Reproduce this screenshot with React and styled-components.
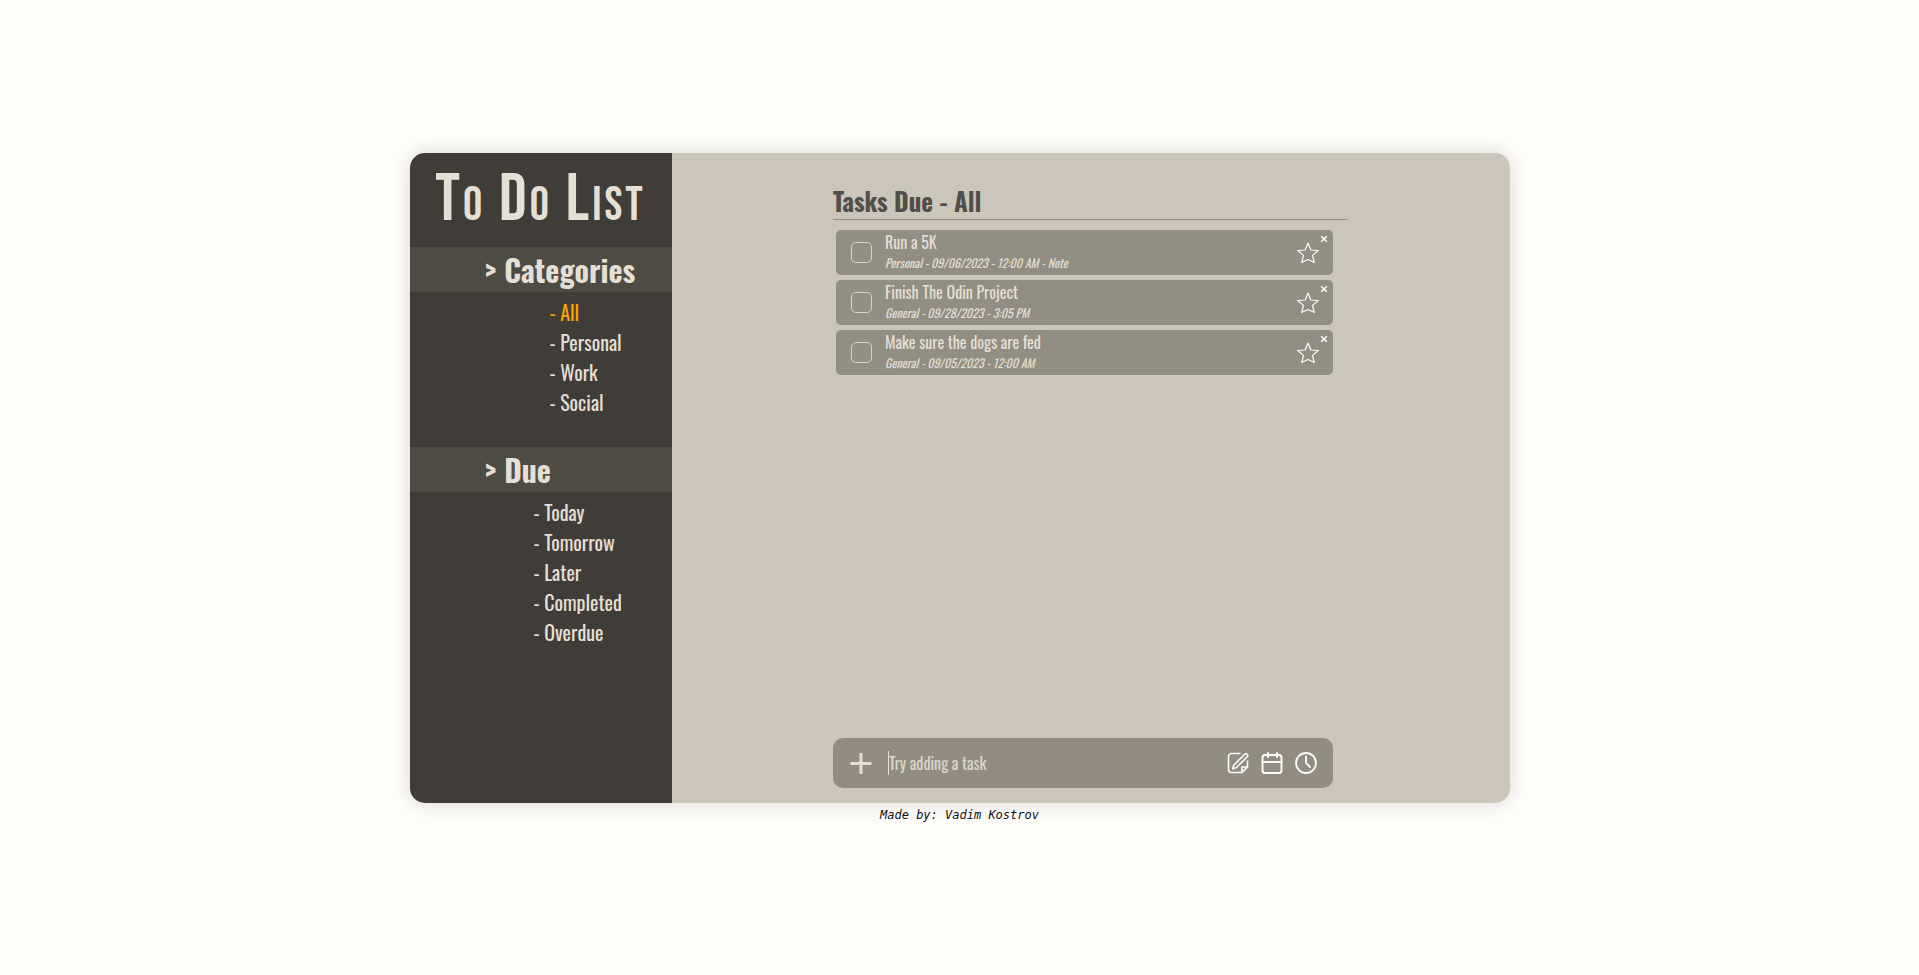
import React, { useState } from "react";
import styled, { createGlobalStyle } from "styled-components";

const Global = createGlobalStyle`
  *, *::before, *::after { box-sizing: border-box; }
  body {
    margin: 0;
    background: #fffdfa;
    color: #e6dfd4;
    font-family: "Oswald", "Liberation Sans Narrow", "Liberation Sans", sans-serif;
  }
  button, input { font: inherit; color: inherit; }
`;

const Page = styled.div`
  min-height: 100vh;
  display: flex;
  flex-direction: column;
  align-items: center;
  justify-content: center;
`;

const Card = styled.div`
  display: flex;
  width: 100%;
  max-width: 1100px;
  min-height: 650px;
  border-radius: 15px;
  overflow: hidden;
  box-shadow: 0 0 20px rgba(0, 0, 0, 0.15);
`;

const Sidebar = styled.aside`
  flex: 0 0 262px;
  background: #403d38;
`;

const Logo = styled.h1`
  margin: 0;
  height: 94px;
  padding-top: 15px;
  text-align: center;
  font-family: "Bebas Neue", "Oswald", "Liberation Sans Narrow", sans-serif;
  font-size: 68px;
  line-height: 64px;
  font-weight: 400;
  font-variant: small-caps;
  letter-spacing: 3px;
  white-space: nowrap;
`;

const Band = styled.h2`
  margin: 0;
  padding-left: 75px;
  background: #4e4b43;
  font-size: 30px;
  line-height: 45px;
  font-weight: 700;
`;

const Links = styled.ul`
  list-style: none;
  margin: 0;
  padding: 5px 0 30px ${(p) => p.$indent}px;
`;

const NavLink = styled.a`
  display: block;
  font-size: 20px;
  line-height: 30px;
  color: ${(p) => (p.$active ? "orange" : "inherit")};
  text-decoration: none;
`;

const Main = styled.main`
  flex: 1;
  display: flex;
  justify-content: center;
  background: #ccc5b9;
  padding: 30px 20px 15px;
`;

const Column = styled.div`
  width: 515px;
  display: flex;
  flex-direction: column;
`;

const Title = styled.h2`
  margin: 0;
  border-bottom: 1px solid #8f8b7d;
  color: #524f48;
  font-size: 25px;
  line-height: 36px;
  font-weight: 700;
`;

const Tasks = styled.ul`
  list-style: none;
  flex: 1;
  display: flex;
  flex-direction: column;
  gap: 5px;
  margin: 0;
  padding: 10px 15px 0 3px;
`;

const Task = styled.li`
  display: flex;
  height: 45px;
  padding: 0 5px 0 15px;
  border-radius: 5px;
  background: #928e82;
`;

const TaskLabel = styled.label`
  flex: 1;
  display: flex;
  align-items: center;
  gap: 13px;
`;

const Check = styled.input`
  appearance: none;
  width: 21px;
  height: 21px;
  margin: 0;
  border: 1px solid #d9d6bf;
  border-radius: 5px;
  &:checked { background: #e6dfd4; }
`;

const TaskText = styled.span`
  display: flex;
  flex-direction: column;
  padding-bottom: 1px;
`;

const Name = styled.span`
  font-size: 16px;
  line-height: 22px;
`;

const Meta = styled.em`
  font-size: 12px;
  line-height: 20px;
`;

const IconButton = styled.button`
  display: flex;
  align-items: center;
  justify-content: center;
  padding: 0;
  border: 0;
  background: none;
  color: #fbfaf6;
  cursor: pointer;
`;

const CloseButton = styled(IconButton)`
  align-self: flex-start;
  width: 8px;
  height: 18px;
`;

const AddBar = styled.form`
  display: flex;
  align-items: center;
  height: 50px;
  margin-right: 15px;
  padding: 0 15px;
  gap: 10px;
  border-radius: 10px;
  background: #938c81;
`;

const TaskInput = styled.input`
  flex: 1;
  min-width: 0;
  height: 24px;
  margin-left: 4px;
  padding: 0;
  border: 0;
  border-left: 1px solid #e6dfd4;
  outline: 0;
  background: none;
  font-size: 16px;
  &::placeholder { color: #dcd5ca; opacity: 1; }
`;

const Footer = styled.footer`
  height: 19px;
  color: #111;
  font: italic 12px/24px "DejaVu Sans Mono", monospace;
`;

const StarIcon = () => (
  <svg width="24" height="24" viewBox="0 0 24 24" fill="none" stroke="currentColor" strokeWidth="1.2" strokeLinejoin="round">
    <path d="M12 2l2.800 7 7.500.500-5.800 4.900 1.800 7.100L12 18.500l-6.300 3 1.800-7.100L1.700 9.500l7.500-.500z" />
  </svg>
);

const CloseIcon = () => (
  <svg width="8" height="8" viewBox="0 0 8 8" stroke="currentColor" strokeWidth="1.6">
    <path d="M1.200 1.200l5.600 5.600M6.800 1.200l-5.600 5.600" />
  </svg>
);

const PlusIcon = () => (
  <svg width="26" height="26" viewBox="0 0 26 26" stroke="#e6dfd4" strokeWidth="3">
    <path d="M2.500 13.500h21M13 3v21" />
  </svg>
);

const NoteIcon = () => (
  <svg width="24" height="24" viewBox="0 0 24 24" fill="none" stroke="currentColor" strokeWidth="1.6" strokeLinecap="round" strokeLinejoin="round">
    <path d="M14 2.500H5.500a3 3 0 0 0-3 3v13a3 3 0 0 0 3 3H16l5.500-5.500V10" />
    <path d="M16 21.500V16h5.500M18.700 3.300l-11 11-1 3.500 3.500-1 11-11a1.750 1.750 0 0 0-2.500-2.500z" />
  </svg>
);

const CalendarIcon = () => (
  <svg width="24" height="24" viewBox="0 0 24 24" fill="none" stroke="currentColor" strokeWidth="2" strokeLinecap="round" strokeLinejoin="round">
    <rect x="2.500" y="4" width="19" height="18" rx="2.500" />
    <path d="M2.500 11h19M8 2v4M17 2v4" />
  </svg>
);

const ClockIcon = () => (
  <svg width="24" height="24" viewBox="0 0 24 24" fill="none" stroke="currentColor" strokeWidth="1.800" strokeLinecap="round" strokeLinejoin="round">
    <circle cx="12" cy="12" r="10" />
    <path d="M12 5.500V12l4 4" />
  </svg>
);

const categories = ["All", "Personal", "Work", "Social"];
const dueFilters = ["Today", "Tomorrow", "Later", "Completed", "Overdue"];
const tasks = [
  { name: "Run a 5K", meta: "Personal - 09/06/2023 - 12:00 AM - Note" },
  { name: "Finish The Odin Project", meta: "General - 09/28/2023 - 3:05 PM" },
  { name: "Make sure the dogs are fed", meta: "General - 09/05/2023 - 12:00 AM" },
];

function NavSection({ title, items, active, indent }) {
  return (
    <section>
      <Band>&gt; {title}</Band>
      <Links $indent={indent}>
        {items.map((item) => (
          <li key={item}>
            <NavLink href="#" $active={item === active}>- {item}</NavLink>
          </li>
        ))}
      </Links>
    </section>
  );
}

export default function App() {
  const [draft, setDraft] = useState("");
  return (
    <>
      <Global />
      <Page>
        <Card>
          <Sidebar>
            <Logo>To Do List</Logo>
            <nav>
              <NavSection title="Categories" items={categories} active="All" indent={140} />
              <NavSection title="Due" items={dueFilters} indent={124} />
            </nav>
          </Sidebar>
          <Main>
            <Column>
              <Title>Tasks Due - All</Title>
              <Tasks>
                {tasks.map((task) => (
                  <Task key={task.name}>
                    <TaskLabel>
                      <Check type="checkbox" />
                      <TaskText>
                        <Name>{task.name}</Name>
                        <Meta>{task.meta}</Meta>
                      </TaskText>
                    </TaskLabel>
                    <IconButton type="button" aria-label="Mark as important"><StarIcon /></IconButton>
                    <CloseButton type="button" aria-label="Delete task"><CloseIcon /></CloseButton>
                  </Task>
                ))}
              </Tasks>
              <AddBar onSubmit={(e) => e.preventDefault()}>
                <IconButton type="submit" aria-label="Add task"><PlusIcon /></IconButton>
                <TaskInput
                  aria-label="New task"
                  placeholder="Try adding a task"
                  value={draft}
                  onChange={(e) => setDraft(e.target.value)}
                />
                <IconButton type="button" aria-label="Add note"><NoteIcon /></IconButton>
                <IconButton type="button" aria-label="Pick date"><CalendarIcon /></IconButton>
                <IconButton type="button" aria-label="Pick time"><ClockIcon /></IconButton>
              </AddBar>
            </Column>
          </Main>
        </Card>
        <Footer>Made by: Vadim Kostrov</Footer>
      </Page>
    </>
  );
}
